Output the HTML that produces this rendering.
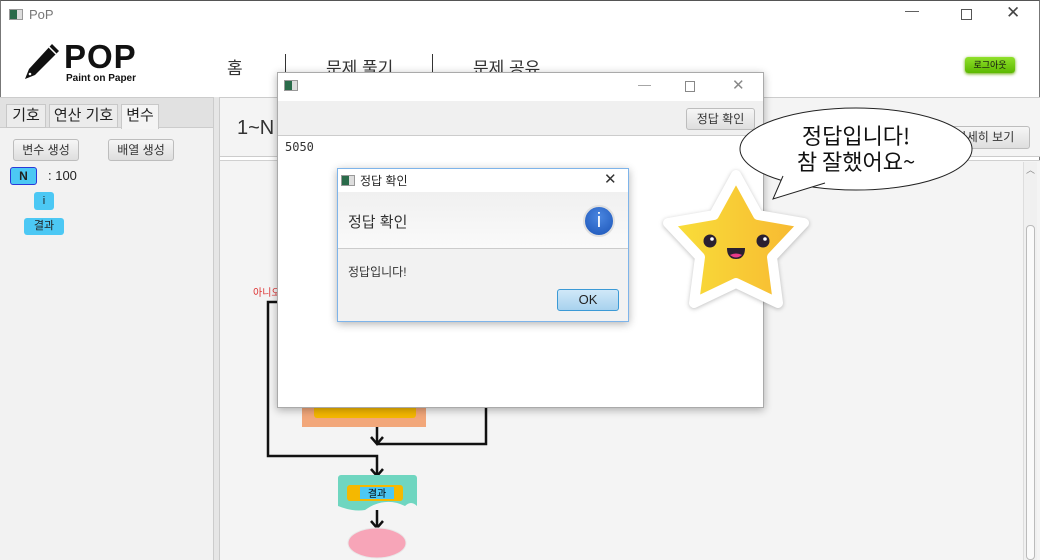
<!DOCTYPE html>
<html><head><meta charset="utf-8"><style>
*{margin:0;padding:0;box-sizing:border-box}
body{width:1040px;height:560px;overflow:hidden;position:relative;background:#fff;font-family:"Liberation Sans","Noto Sans CJK KR",sans-serif;color:#222}
.a{position:absolute}
.btn{position:absolute;border:1px solid #bdbdbd;border-radius:3px;background:linear-gradient(#f6f6f6,#dedede);font-size:12px;color:#333;text-align:center}
</style></head><body>
<div class="a" style="left:0;top:0;width:1040px;height:560px;border:1px solid #777;border-top:1px solid #555"></div>
<div class="a" style="left:9px;top:9px;width:14px;height:11px;background:linear-gradient(90deg,#2a6b4a 60%,#ddd 60%);border:1px solid #999"></div>
<div class="a" style="left:29px;top:7px;font-size:13px;color:#777">PoP</div>
<div class="a" style="left:905px;top:2px;font-size:14px;color:#555;letter-spacing:0">—</div>
<div class="a" style="left:961px;top:9px;width:11px;height:11px;border:1px solid #555"></div>
<div class="a" style="left:1006px;top:3px;font-size:17px;color:#444">✕</div>
<!-- logo -->
<svg class="a" style="left:22px;top:42px" width="40" height="40" viewBox="0 0 40 40"><path d="M30 2 L37 9 L13 33 L3 37 L7 27 Z" fill="#111"/><path d="M27 5 L34 12" stroke="#fff" stroke-width="1.5"/><circle cx="8" cy="32" r="1.3" fill="#fff"/></svg>
<div class="a" style="left:64px;top:38px;font-size:33px;font-weight:bold;color:#111;letter-spacing:1px">POP</div>
<div class="a" style="left:66px;top:73px;font-size:10px;font-weight:bold;color:#111">Paint on Paper</div>
<div class="a" style="left:227px;top:54px;font-size:17px;color:#333">홈</div>
<div class="a" style="left:285px;top:54px;width:1px;height:20px;background:#333"></div>
<div class="a" style="left:326px;top:54px;font-size:17px;color:#333">문제 풀기</div>
<div class="a" style="left:432px;top:54px;width:1px;height:20px;background:#333"></div>
<div class="a" style="left:473px;top:54px;font-size:17px;color:#333">문제 공유</div>
<div class="a" style="left:965px;top:57px;width:50px;height:16px;border-radius:3px;background:linear-gradient(#8fe02a,#5cb800);box-shadow:0 1px 3px #6a0;font-size:9px;text-align:center;line-height:16px;color:#111">로그아웃</div>
<!-- left panel -->
<div class="a" style="left:0;top:97px;width:215px;height:463px;background:#f2f2f2;border-top:1px solid #ccc"></div>
<div class="a" style="left:0;top:98px;width:213px;height:30px;background:#e1e1e1;border-bottom:1px solid #ccc"></div>
<div class="a" style="left:6px;top:104px;width:40px;height:24px;background:#ececec;border:1px solid #c8c8c8;font-size:15px;text-align:center;line-height:22px">기호</div>
<div class="a" style="left:49px;top:104px;width:69px;height:24px;background:#ececec;border:1px solid #c8c8c8;font-size:15px;text-align:center;line-height:22px">연산 기호</div>
<div class="a" style="left:121px;top:104px;width:38px;height:25px;background:#f4f4f4;border:1px solid #c8c8c8;border-bottom:none;font-size:15px;text-align:center;line-height:22px">변수</div>
<div class="btn" style="left:13px;top:139px;width:66px;height:22px;line-height:20px">변수 생성</div>
<div class="btn" style="left:108px;top:139px;width:66px;height:22px;line-height:20px">배열 생성</div>
<div class="a" style="left:10px;top:167px;width:27px;height:18px;background:#4cc8f4;border:1px solid #2a3ad8;border-radius:3px;font-size:12px;font-weight:bold;text-align:center;line-height:16px">N</div>
<div class="a" style="left:48px;top:168px;font-size:13px">: 100</div>
<div class="a" style="left:34px;top:192px;width:20px;height:18px;background:#4cc8f4;border-radius:3px;font-size:11px;text-align:center;line-height:18px">i</div>
<div class="a" style="left:24px;top:218px;width:40px;height:17px;background:#4cc8f4;border-radius:3px;font-size:11px;text-align:center;line-height:17px">결과</div>
<!-- main -->
<div class="a" style="left:213px;top:97px;width:7px;height:463px;background:#e6e6e6;border-left:1px solid #ccc;border-right:1px solid #ccc"></div>
<div class="a" style="left:220px;top:97px;width:820px;height:60px;background:#f4f4f4;border-top:1px solid #ccc;border-bottom:1px solid #ccc"></div>
<div class="a" style="left:237px;top:117px;font-size:20px;color:#333">1~N</div>
<div class="btn" style="left:940px;top:126px;width:90px;height:23px;line-height:21px">자세히 보기</div>
<div class="a" style="left:220px;top:160px;width:820px;height:400px;background:#f4f4f4;border-top:1px solid #d0d0d0"></div>
<div class="a" style="left:1023px;top:162px;width:14px;height:398px;background:#f0f0f0;border-left:1px solid #ddd"></div>
<div class="a" style="left:1026px;top:225px;width:9px;height:335px;background:#fafafa;border:1px solid #bbb;border-radius:4px"></div>
<div class="a" style="left:1026px;top:163px;font-size:9px;color:#888">︿</div>
<!-- flowchart -->
<div class="a" style="left:253px;top:284px;font-size:10px;color:#d33">아니오</div>
<svg class="a" style="left:220px;top:280px" width="300" height="280">
<polyline points="72,22 48,22 48,176 157,176 157,196" fill="none" stroke="#111" stroke-width="2.5"/>
<polyline points="151,189 157,196 163,189" fill="none" stroke="#111" stroke-width="2.5"/>
<polyline points="266,120 266,164 157,164" fill="none" stroke="#111" stroke-width="2.5"/>
<polyline points="157,147 157,164" fill="none" stroke="#111" stroke-width="2.5"/>
<polyline points="151,157 157,164 163,157" fill="none" stroke="#111" stroke-width="2.5"/>
<polyline points="157,230 157,248" fill="none" stroke="#111" stroke-width="2.5"/>
<polyline points="151,241 157,248 163,241" fill="none" stroke="#111" stroke-width="2.5"/>
<rect x="82" y="120" width="124" height="27" fill="#f2a77a"/>
<rect x="94" y="122" width="102" height="16" fill="#f5b800" rx="3"/>
<path d="M118 195 h76 a3 3 0 0 1 3 3 v28 q-6 -6 -12 0 q-20 -10 -40 4 q-12 2 -27 -4 v-28 a3 3 0 0 1 3 -3z" fill="#6fd6c0"/>
<rect x="127" y="205" width="56" height="16" rx="3" fill="#f5b800"/>
<rect x="140" y="207" width="34" height="12" fill="#4cc8f4"/>
<text x="157" y="217" font-size="10" text-anchor="middle" font-family="Noto Sans CJK KR">결과</text>
<ellipse cx="157" cy="263" rx="29" ry="15" fill="#f7a5b8" stroke="#e8e8e8"/>
</svg>
<!-- dialog window -->
<div class="a" style="left:277px;top:72px;width:487px;height:336px;background:#fff;border:1px solid #aaa;box-shadow:0 2px 8px rgba(0,0,0,.3)"></div>
<div class="a" style="left:284px;top:80px;width:14px;height:11px;background:linear-gradient(90deg,#2a6b4a 60%,#ddd 60%);border:1px solid #999"></div>
<div class="a" style="left:638px;top:77px;font-size:13px;color:#999">—</div>
<div class="a" style="left:685px;top:81px;width:10px;height:11px;border:1px solid #888"></div>
<div class="a" style="left:732px;top:76px;font-size:15px;color:#888">✕</div>
<div class="a" style="left:278px;top:101px;width:485px;height:35px;background:#f0f0f0;border-bottom:1px solid #ccc"></div>
<div class="btn" style="left:686px;top:108px;width:69px;height:22px;line-height:20px">정답 확인</div>
<div class="a" style="left:285px;top:140px;font-size:12px;color:#333;font-family:'DejaVu Sans Mono',monospace">5050</div>
<!-- alert -->
<div class="a" style="left:337px;top:168px;width:292px;height:154px;background:#f2f2f2;border:1px solid #7eb4ea;box-shadow:0 2px 8px rgba(0,0,0,.3)"></div>
<div class="a" style="left:338px;top:169px;width:290px;height:23px;background:#fff"></div>
<div class="a" style="left:341px;top:175px;width:14px;height:11px;background:linear-gradient(90deg,#2a6b4a 60%,#ddd 60%);border:1px solid #999"></div>
<div class="a" style="left:360px;top:172px;font-size:12px">정답 확인</div>
<div class="a" style="left:604px;top:170px;font-size:15px;color:#333">✕</div>
<div class="a" style="left:338px;top:192px;width:290px;height:57px;background:linear-gradient(#f0f0f0,#fafafa);border-bottom:1px solid #ccc"></div>
<div class="a" style="left:348px;top:211px;font-size:15px;color:#333">정답 확인</div>
<div class="a" style="left:583px;top:205px;width:32px;height:32px;border-radius:50%;background:radial-gradient(circle at 50% 35%,#4a86e0,#1c55b8);border:2px solid #e0e0e0;color:#fff;font-size:20px;text-align:center;line-height:28px">i</div>
<div class="a" style="left:348px;top:263px;font-size:12px;color:#333">정답입니다!</div>
<div class="a" style="left:557px;top:289px;width:62px;height:22px;border:1px solid #3c9ad6;border-radius:3px;background:linear-gradient(#d0e8f8,#a8d2ee);font-size:13px;text-align:center;line-height:20px">OK</div>
<!-- star & bubble -->
<svg class="a" style="left:650px;top:100px" width="390" height="220">
<ellipse cx="206" cy="49" rx="116" ry="41" fill="#fff" stroke="#222"/>
<path d="M133 76 L123 99 L175 83" fill="#fff" stroke="#222"/>
<path d="M135 74 L125 97 L178 80 Z" fill="#fff"/>
<text x="206" y="44" font-size="22" text-anchor="middle" font-family="Noto Sans CJK KR" fill="#111">정답입니다!</text>
<text x="206" y="70" font-size="22" text-anchor="middle" font-family="Noto Sans CJK KR" fill="#111">참 잘했어요~</text>
<defs><linearGradient id="g" x1="0" x2="1"><stop offset="0" stop-color="#f9e03a"/><stop offset="1" stop-color="#f7b731"/></linearGradient></defs>
<path d="M86 75 L108 115 L154 123 L122 157 L128 203 L86 183 L44 203 L50 157 L18 123 L64 115 Z" fill="url(#g)" stroke="#fff" stroke-width="10" stroke-linejoin="round" style="filter:drop-shadow(0 1px 2px rgba(0,0,0,.25))"/>
<circle cx="60" cy="141" r="6.5" fill="#2a2030"/><circle cx="113" cy="141" r="6.5" fill="#2a2030"/>
<circle cx="62" cy="139" r="1.8" fill="#fff"/><circle cx="115" cy="139" r="1.8" fill="#fff"/>
<path d="M77 148 h18 q0 11 -9 11 q-9 0 -9 -11z" fill="#2a2030"/><path d="M80 155 q6 -3 12 0 q-6 5 -12 0z" fill="#e83a8a"/>
</svg>
</body></html>
